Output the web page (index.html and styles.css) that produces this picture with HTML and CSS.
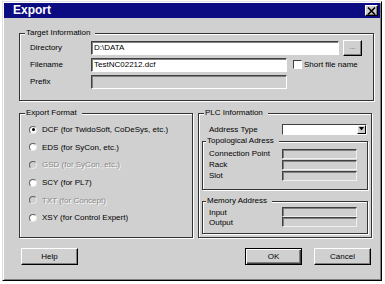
FILE: index.html
```html
<!DOCTYPE html>
<html>
<head>
<meta charset="utf-8">
<title>Export</title>
<link rel="stylesheet" href="styles.css">
</head>
<body>
<div class="window">
  <div class="titlebar">
    <span class="title">Export</span>
    <span class="close"><svg width="9" height="8" viewBox="0 0 9 8"><path d="M1 0.5 L8 7.5 M8 0.5 L1 7.5" stroke="#000" stroke-width="1.6"/></svg></span>
  </div>
  <div class="content">
    <fieldset class="group target">
      <legend>Target Information</legend>
      <div class="row">
        <span class="lbl">Directory</span>
        <span class="field w-dir">D:\DATA</span>
        <span class="btn browse">...</span>
      </div>
      <div class="row">
        <span class="lbl">Filename</span>
        <span class="field w-file">TestNC02212.dcf</span>
        <span class="check"></span>
        <span class="check-lbl">Short file name</span>
      </div>
      <div class="row">
        <span class="lbl">Prefix</span>
        <span class="field w-file disabled"></span>
      </div>
    </fieldset>
    <div class="mid">
      <fieldset class="group format">
        <legend>Export Format</legend>
        <div class="radio-row"><span class="radio checked"></span><span>DCF (for TwidoSoft, CoDeSys, etc.)</span></div>
        <div class="radio-row"><span class="radio"></span><span>EDS (for SyCon, etc.)</span></div>
        <div class="radio-row dim"><span class="radio"></span><span>GSD (for SyCon, etc.)</span></div>
        <div class="radio-row"><span class="radio"></span><span>SCY (for PL7)</span></div>
        <div class="radio-row dim"><span class="radio"></span><span>TXT (for Concept)</span></div>
        <div class="radio-row"><span class="radio"></span><span>XSY (for Control Expert)</span></div>
      </fieldset>
      <fieldset class="group plc">
        <legend>PLC Information</legend>
        <div class="addr-row">
          <span class="lbl2">Address Type</span>
          <span class="combo"><span class="combo-btn"><svg width="5" height="4" viewBox="0 0 5 4"><path d="M0 0 H5 L2.5 3.5 Z" fill="#000"/></svg></span></span>
        </div>
        <fieldset class="group sub topo">
          <legend>Topological Adress</legend>
          <div class="srow"><span class="lbl3">Connection Point</span><span class="sfield"></span></div>
          <div class="srow"><span class="lbl3">Rack</span><span class="sfield"></span></div>
          <div class="srow"><span class="lbl3">Slot</span><span class="sfield"></span></div>
        </fieldset>
        <fieldset class="group sub mem">
          <legend>Memory Address</legend>
          <div class="srow"><span class="lbl3">Input</span><span class="sfield"></span></div>
          <div class="srow"><span class="lbl3">Output</span><span class="sfield"></span></div>
        </fieldset>
      </fieldset>
    </div>
    <div class="buttons">
      <span class="btn push">Help</span>
      <span class="spacer"></span>
      <span class="btn push default">OK</span>
      <span class="btn push">Cancel</span>
    </div>
  </div>
</div>
</body>
</html>
```
FILE: styles.css
```css
* { box-sizing: border-box; }
body {
  margin: 0;
  background: #ffffff;
  font-family: "Liberation Sans", Arial, sans-serif;
  font-size: 8px;
  color: #000;
}
.window {
  margin: 1px 0 0 2px;
  width: 380px;
  height: 280px;
  background: #d0d0d0;
  border: 1px solid;
  border-color: #e0e0e0 #000 #000 #e0e0e0;
  box-shadow: inset 1px 1px 0 #fff, inset -1px -1px 0 #808080;
  padding: 1px;
  display: flex;
  flex-direction: column;
}
.titlebar {
  height: 15px;
  background: #0c0c82;
  display: flex;
  align-items: center;
  justify-content: space-between;
  padding: 0 2px 0 9px;
}
.title {
  color: #fff;
  font-weight: bold;
  font-size: 12px;
  line-height: 15px;
}
.close {
  width: 13px;
  height: 11px;
  background: #d0d0d0;
  border: 1px solid;
  border-color: #fff #000 #000 #fff;
  box-shadow: inset -1px -1px 0 #808080;
  display: flex;
  align-items: center;
  justify-content: center;
}
.close svg { display: block; }
.content {
  flex: 1;
  padding: 10px 6px 0 15px;
  display: flex;
  flex-direction: column;
}
.group {
  margin: 0;
  min-width: 0;
  border: 1px solid #333;
  box-shadow: 1px 1px 0 #fff, inset 1px 1px 0 #fff;
}
.group legend {
  padding: 0 5px 0 1px;
  height: 10px;
  line-height: 10px;
  background: #d0d0d0;
}
.target { padding: 2px 10px 9px 10px; }
.target legend { margin-left: -5px; }
.row {
  display: flex;
  align-items: center;
  height: 15px;
  margin-bottom: 2px;
}
.lbl { width: 61px; }
.field {
  height: 14px;
  background: #fff;
  border: 1px solid;
  border-color: #404040 #fff #fff #404040;
  box-shadow: inset 1px 1px 0 #808080;
  padding-left: 2px;
  line-height: 12px;
  white-space: nowrap;
}
.w-dir { width: 248px; }
.w-file { width: 196px; }
.field.disabled { background: #d0d0d0; }
.btn {
  background: #d0d0d0;
  border: 1px solid;
  border-color: #fff #000 #000 #fff;
  box-shadow: inset -1px -1px 0 #808080;
  display: flex;
  align-items: center;
  justify-content: center;
}
.browse {
  width: 19px;
  height: 16px;
  margin-left: 4px;
  color: #606060;
  font-size: 7px;
  padding-bottom: 2px;
}
.check {
  width: 9px;
  height: 9px;
  margin-left: 6px;
  background: #fff;
  border: 1px solid;
  border-color: #404040 #fff #fff #404040;
}
.check-lbl { margin-left: 2px; margin-top: -1px; }
.mid {
  display: flex;
  gap: 5px;
  margin-top: 7px;
  height: 130px;
}
.format {
  width: 174px;
  padding: 3px 0 0 9px;
}
.format legend { margin-left: -4px; }
.radio-row {
  display: flex;
  align-items: center;
  height: 17.6px;
}
.radio {
  width: 8px;
  height: 8px;
  border-radius: 50%;
  background: #fff;
  border: 1px solid;
  border-color: #606060 #e8e8e8 #e8e8e8 #606060;
  margin-right: 5px;
  position: relative;
}
.radio.checked::after {
  content: "";
  position: absolute;
  left: 1.5px;
  top: 1.5px;
  width: 3px;
  height: 3px;
  border-radius: 50%;
  background: #000;
}
.dim { color: #8a8a8a; text-shadow: 1px 1px 0 #fff; }
.dim .radio { background: #d0d0d0; }
.plc {
  width: 174px;
  padding: 5px 3px 0 3px;
}
.plc > legend { margin-left: 2px; }
.addr-row {
  display: flex;
  align-items: center;
  height: 12px;
  padding-left: 7px;
}
.lbl2 { width: 73px; }
.combo {
  width: 85px;
  height: 11px;
  background: #fff;
  border: 1px solid;
  border-color: #404040 #fff #fff #404040;
  display: flex;
  justify-content: flex-end;
}
.combo-btn {
  width: 9px;
  height: 9px;
  background: #d0d0d0;
  border: 1px solid;
  border-color: #fff #000 #000 #fff;
  display: flex;
  align-items: center;
  justify-content: center;
}
.combo-btn svg { display: block; }
.sub { box-shadow: 1px 1px 0 #fff, inset 1px 1px 0 #fff; }
.sub legend { margin-left: -3px; }
.topo { margin-top: 1px; padding: 2px 0 8px 6px; }
.mem { margin-top: 6px; padding: 1px 0 6px 6px; }
.srow {
  display: flex;
  align-items: center;
  height: 11px;
}
.mem .srow { height: 10px; }
.lbl3 { width: 73px; }
.sfield {
  width: 75px;
  height: 10px;
  background: #d0d0d0;
  border: 1px solid;
  border-color: #404040 #f0f0f0 #f0f0f0 #404040;
  box-shadow: inset 1px 1px 0 #808080;
}
.buttons {
  display: flex;
  margin-top: 10px;
  padding: 0 0 0 2px;
}
.spacer { flex: 1; }
.push {
  width: 57px;
  height: 17px;
}
.push + .push { margin-left: 12px; }
.default {
  border-color: #000;
  box-shadow: inset 1px 1px 0 #fff, inset -1px -1px 0 #404040, inset -2px -2px 0 #808080;
}
.buttons .push:last-child { margin-right: 3px; }
```
